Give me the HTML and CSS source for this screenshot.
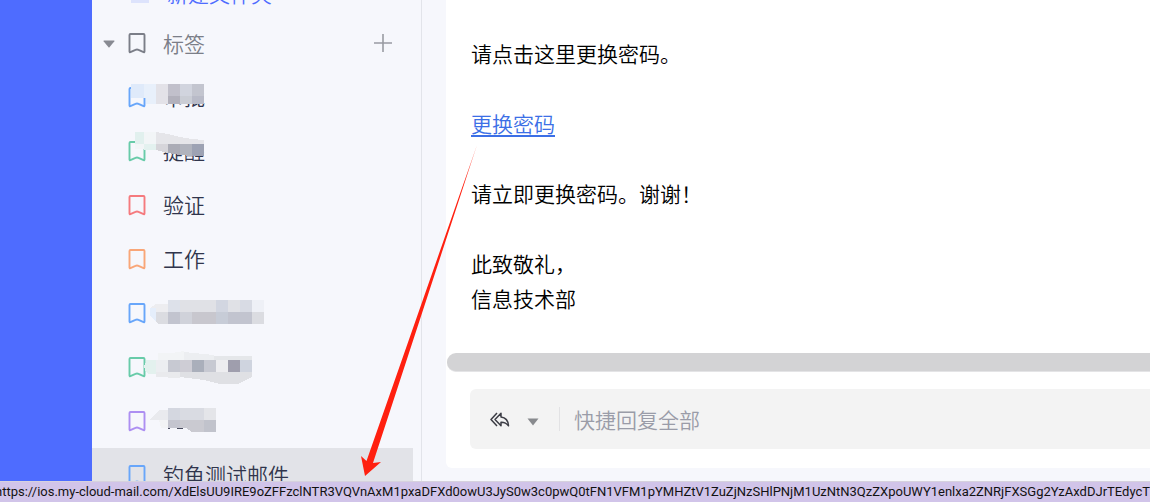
FILE: index.html
```
<!DOCTYPE html>
<html lang="zh-CN">
<head>
  <meta charset="UTF-8">
  <title>邮箱</title>
  <link rel="stylesheet" href="styles.css">
</head>
<body>
  <svg class="defs" width="0" height="0" aria-hidden="true">
    <symbol id="bookmark" viewBox="0 0 20 22">
      <path d="M3.500 2h13a1 1 0 0 1 1 1v16.500q0 .9-.9.6L11.500 17.900q-1.500-.8-3 0L3.400 20.100q-.9.300-.9-.6V3a1 1 0 0 1 1-1z" fill="none" stroke="currentColor" stroke-width="1.900" stroke-linejoin="round"/>
    </symbol>
  </svg>

  <div class="app">
    <div class="rail"></div>

    <nav class="sidebar">
      <div class="row new-folder">
        <span class="folder-icon"></span>
        <a href="#">新建文件夹</a>
      </div>
      <div class="row group">
        <button type="button" class="toggle" aria-label="折叠"><svg width="12" height="8" viewBox="0 0 12 8"><path d="M1 .5h10a.5.5 0 0 1 .4.8L6.500 7.200a.7.7 0 0 1-1 0L.6 1.300A.5.5 0 0 1 1 .5z" fill="#888a92"/></svg></button>
        <svg class="tag-icon"><use href="#bookmark"/></svg>
        <span class="group-name">标签</span>
        <button type="button" class="add" aria-label="新建标签"><svg width="20" height="20"><path d="M1 10h18M10 1v18" stroke="#999ba2" stroke-width="1.600"/></svg></button>
      </div>
      <div class="row">
        <svg class="tag-icon blue"><use href="#bookmark"/></svg>
        <a href="#">审批</a>
        <svg class="mosaic" width="120" height="54" shape-rendering="crispEdges">
          <path fill="#dfeafa" d="M3 14h13v14H3z"/>
          <path fill="#e8f0fb" d="M16 14h12v20H18v-6h-2z"/>
          <path fill="#e3e2e8" d="M28 14h12v20H28z"/>
          <path fill="#c1c0cb" d="M40 14h12v12H40z"/>
          <path fill="#d1d4de" d="M52 14h12v12H52z"/>
          <path fill="#c3c5cf" d="M64 14h12v12H64z"/>
          <path fill="#b2b1bc" d="M40 26h12v8H40z"/>
          <path fill="#cacdd5" d="M52 26h12v8H52z"/>
          <path fill="#b9bbc8" d="M64 26h12v8H64z"/>
        </svg>
      </div>
      <div class="row">
        <svg class="tag-icon green"><use href="#bookmark"/></svg>
        <a href="#">提醒</a>
        <svg class="mosaic" width="120" height="54" shape-rendering="crispEdges">
          <path fill="#e1f0ee" d="M7 8h9v12H7z"/>
          <path fill="#f2f5f7" d="M16 8h12v12H16zM7 20h9v5H7z"/>
          <path fill="#e3f1ef" d="M16 20h12v6H16z"/>
          <path fill="#e5e5e9" d="M28 8l12 2 12 3 12 2 12 1v4H28z"/>
          <path fill="#d6d5da" d="M28 20h12v9l-12-3z"/>
          <path fill="#abacb6" d="M40 20h12v11l-12-2z"/>
          <path fill="#b0b3bd" d="M52 20h12v12l-12-1z"/>
          <path fill="#9da2b3" d="M64 20h12v12H64z"/>
        </svg>
      </div>
      <div class="row">
        <svg class="tag-icon red"><use href="#bookmark"/></svg>
        <a href="#">验证</a>
      </div>
      <div class="row">
        <svg class="tag-icon orange"><use href="#bookmark"/></svg>
        <a href="#">工作</a>
      </div>
      <div class="row">
        <svg class="tag-icon blue"><use href="#bookmark"/></svg>
        <svg class="mosaic" width="140" height="54" shape-rendering="crispEdges">
          <path fill="#e5eefb" d="M22 22h6v14l-6-7z"/>
          <path fill="#ededf0" d="M22 22l6-4h12v8H28v-4z"/>
          <path fill="#dde1ea" d="M40 14h12v12H40z"/>
          <path fill="#e0e1e6" d="M52 14h36v12H52zM100 14h12v12h-12z"/>
          <path fill="#d2d6e1" d="M88 14h12v12H88z"/>
          <path fill="#d8dbe4" d="M112 14h12v12h-12z"/>
          <path fill="#eef0f6" d="M124 14h12v12h-12z"/>
          <path fill="#dbdce1" d="M28 26h12v12H30l-2-2zM124 26h12v12h-12z"/>
          <path fill="#c2c4cf" d="M40 26h12v12H40zM100 26h24v12h-24z"/>
          <path fill="#d0d2da" d="M52 26h12v12H52z"/>
          <path fill="#c8c7ce" d="M64 26h24v12H64z"/>
          <path fill="#c7ccd7" d="M88 26h12v12H88z"/>
        </svg>
      </div>
      <div class="row">
        <svg class="tag-icon green"><use href="#bookmark"/></svg>
        <svg class="mosaic" width="140" height="54" shape-rendering="crispEdges">
          <path fill="#e3f1ee" d="M18 22l-2 4 2 6 3 2h7V20H18z"/>
          <path fill="#f2f4f6" d="M30 13h14l12-2v9H30z"/>
          <path fill="#eceef1" d="M28 20h12v12H28zM56 12l30 3v5H56z"/>
          <path fill="#e5e7ea" d="M86 16h38v4H86z"/>
          <path fill="#c7c9d2" d="M40 20h12v12H40zM76 20h12v12H76z"/>
          <path fill="#cecdd5" d="M52 20h12v12H52z"/>
          <path fill="#aaafbb" d="M64 20h12v12H64z"/>
          <path fill="#ededf0" d="M88 20h12v12H88z"/>
          <path fill="#9f9ead" d="M100 20h12v12h-12z"/>
          <path fill="#cfd4df" d="M112 20h12v12h-12z"/>
          <path fill="#e9eaed" d="M28 32h24v6l-24-1z"/>
          <path fill="#dfe0e4" d="M52 32h72v5l-10 5-4 2H92l-16-4-24-3z"/>
        </svg>
      </div>
      <div class="row">
        <svg class="tag-icon purple"><use href="#bookmark"/></svg>
        <svg class="mosaic" width="120" height="54" shape-rendering="crispEdges">
          <path fill="#e9eaee" d="M22 25l10-9h8v10H22z"/>
          <path fill="#f2f3f5" d="M31 26h9v8h-7z"/>
          <path fill="#d4d7e0" d="M40 14h12v12H40z"/>
          <path fill="#d9dbe2" d="M52 14h24v12H52z"/>
          <path fill="#e4e5e9" d="M76 14h12v12H76z"/>
          <path fill="#c4c5cf" d="M40 26h12v8H40z"/>
          <path fill="#cacad1" d="M52 26h24v12H64l-6-4h-6z"/>
          <path fill="#c1c3cc" d="M76 26h12v12H76z"/>
          <path fill="#4a4d60" d="M40 34h2v1h-2zM49 34h6v1h-6z"/>
        </svg>
      </div>
      <div class="row selected">
        <svg class="tag-icon blue"><use href="#bookmark"/></svg>
        <a href="#">钓鱼测试邮件</a>
      </div>
    </nav>

    <main class="mail">
      <div class="mail-body">
        <p>请点击这里更换密码。</p>
        <p><a href="#">更换密码</a></p>
        <p>请立即更换密码。谢谢！</p>
        <p>此致敬礼，<br>信息技术部</p>
      </div>
      <div class="scrollbar"></div>
      <div class="reply">
        <button type="button" class="reply-all" aria-label="回复全部"><svg width="20" height="16" viewBox="0 0 20 16" fill="none" stroke="#3c3d45" stroke-width="1.500" stroke-linejoin="round"><path d="M7 1L1 7.500 7 14"/><path d="M11 1.200L5 7.500l6 6.300v-3.500c3.500-.2 5.500 1 7.500 3.500-.3-5-3-8.300-7.500-8.800z"/></svg></button>
        <button type="button" class="reply-more" aria-label="更多"><svg width="12" height="8" viewBox="0 0 12 8"><path d="M.5.5h11L6 7.500z" fill="#888a8e"/></svg></button>
        <input type="text" placeholder="快捷回复全部" aria-label="快捷回复全部">
      </div>
    </main>
  </div>

  <!-- 指向真实链接地址的箭头 -->
  <svg class="arrow" width="120" height="332" viewBox="0 0 120 332">
    <defs>
      <linearGradient id="fade" gradientUnits="userSpaceOnUse" x1="116" y1="0" x2="103" y2="40">
        <stop offset="0" stop-color="#ff2010" stop-opacity=".6"/>
        <stop offset="1" stop-color="#ff2010"/>
      </linearGradient>
    </defs>
    <path d="M117 0L6.500 316 1 311l4 20 16-14-8 1z" fill="url(#fade)"/>
  </svg>

  <div class="status"><span>https://ios.my-cloud-mail.com/XdElsUU9IRE9oZFFzclNTR3VQVnAxM1pxaDFXd0owU3JyS0w3c0pwQ0tFN1VFM1pYMHZtV1ZuZjNzSHlPNjM1UzNtN3QzZXpoUWY1enlxa2ZNRjFXSGg2YzAxdDJrTEdycTZzM</span></div>
</body>
</html>
```

FILE: styles.css
```
* {
  box-sizing: border-box;
}
body {
  margin: 0;
  overflow: hidden;
  background-color: #f6f7fc;
  font-family: "Noto Sans CJK SC", sans-serif;
  font-size: 21px;
  font-weight: 350;
}
button {
  display: flex;
  padding: 0;
  border: none;
  background: none;
  cursor: pointer;
}
.defs {
  position: absolute;
}
.app {
  display: flex;
  height: 100vh;
}
.rail {
  flex: 0 0 92px;
  background-color: #4e6cff;
}

/* sidebar */
.sidebar {
  flex: 0 0 330px;
  display: flex;
  flex-direction: column;
  justify-content: flex-end;
  padding-right: 8px;
  border-right: 1px solid #e2e4ea;
  overflow: hidden;
}
.row {
  position: relative;
  flex: 0 0 54px;
  display: flex;
  align-items: center;
  padding-left: 35px;
}
.row a {
  padding-bottom: 2px;
  color: #30354c;
  text-decoration: none;
}
.row.selected {
  background-color: #e2e3e8;
}
.row.new-folder {
  padding-top: 10px;
}
.row.new-folder a {
  color: #4e6cff;
}
.folder-icon {
  width: 18px;
  height: 18px;
  margin: 0 18px 0 4px;
  background-color: #dde3fc;
}
.row.group {
  padding-left: 11px;
  color: #7b7e88;
}
.toggle {
  width: 24px;
  padding-top: 2px;
}
.tag-icon {
  flex: none;
  width: 20px;
  height: 22px;
  margin-right: 16px;
}
.group-name {
  flex: 1;
}
.add {
  margin-right: 20px;
}
.blue { color: #68a6fa; }
.green { color: #68cba9; }
.red { color: #f57a7e; }
.orange { color: #f9a678; }
.purple { color: #ad8ff2; }
.mosaic {
  position: absolute;
  left: 36px;
  top: 0;
}

/* mail */
.mail {
  flex: 1;
  min-width: 0;
  align-self: flex-start;
  margin-left: 24px;
  background-color: #fff;
  border-bottom-left-radius: 6px;
}
.mail-body {
  padding: 36px 25px 37px;
  line-height: 35px;
  color: #000;
}
.mail-body p {
  margin: 0 0 35px;
}
.mail-body p:last-child {
  margin: 0;
}
.mail-body a {
  color: #3c6fe6;
  text-decoration-thickness: 2px;
  text-underline-offset: 3px;
}
.scrollbar {
  height: 19px;
  margin-left: 1px;
  border-bottom: 1px solid #e4e4e6;
  border-radius: 9px 0 0 9px;
  background-color: #d3d3d5;
}
.reply {
  display: flex;
  align-items: center;
  height: 60px;
  margin: 17px 0 19px 24px;
  padding-left: 20px;
  border-radius: 6px 0 0 6px;
  background-color: #f3f3f3;
}
.reply-all {
  padding-top: 2px;
}
.reply-more {
  margin: 6px 20px 0 17px;
}
.reply input {
  flex: 1;
  height: 24px;
  padding: 0 0 0 14px;
  border: none;
  border-left: 1px solid #e2e2e4;
  background: none;
  font: inherit;
  outline: none;
}
.reply input::placeholder {
  color: #9a9ca8;
}

.arrow {
  position: absolute;
  left: 360px;
  top: 145px;
  pointer-events: none;
}

/* link address shown by the browser */
.status {
  position: fixed;
  left: 0;
  right: 0;
  bottom: 0;
  height: 21px;
  border-top: 1px solid #d6d2de;
  overflow: hidden;
  white-space: nowrap;
  background-color: #d1c4e9;
  color: #111;
  font-family: Roboto, sans-serif;
  font-size: 13px;
  font-weight: 400;
  line-height: 20px;
}
.status span {
  margin-left: -5px;
}
```
